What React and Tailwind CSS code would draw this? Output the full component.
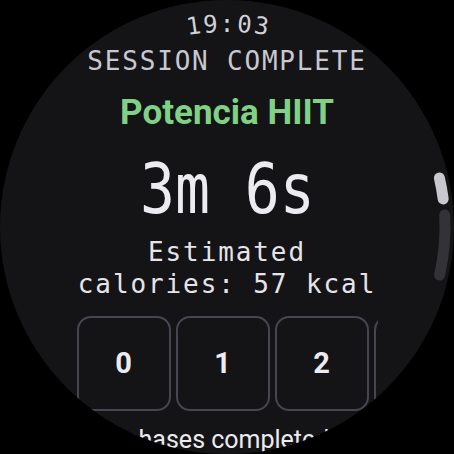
import React from "react";

const mono = { fontFamily: '"DejaVu Sans Mono", monospace' };
const sans = { fontFamily: 'Roboto, "Noto Sans", sans-serif' };

function CurvedTime() {
  // glyphs follow the top arc of the round screen
  return (
    <div className="h-[28px] mt-[10px] shrink-0 text-[24px] leading-[28px] text-[#d2d1d6] flex" style={mono}>
      <span className="inline-block w-[17px] text-center rotate-[-8deg] translate-y-[2px]">1</span>
      <span className="inline-block w-[17px] text-center rotate-[-4deg] translate-y-[0.5px]">9</span>
      <span className="inline-block w-[17px] text-center">:</span>
      <span className="inline-block w-[17px] text-center rotate-[4deg] translate-y-[0.5px]">0</span>
      <span className="inline-block w-[17px] text-center rotate-[8deg] translate-y-[2px]">3</span>
    </div>
  );
}

function ScrollIndicator() {
  return (
    <svg className="absolute inset-0 pointer-events-none" width="454" height="454" viewBox="0 0 454 454">
      <path d="M 444.7 215 A 218 218 0 0 1 439.6 275" stroke="#333337" strokeWidth="11" strokeLinecap="round" fill="none" />
      <path d="M 439.4 178 A 218 218 0 0 1 443.2 199" stroke="#c9c8ce" strokeWidth="11" strokeLinecap="round" fill="none" />
    </svg>
  );
}

export default function App() {
  const phases = [0, 1, 2, 3];

  return (
    <div className="w-[454px] h-[454px] bg-black">
      <div className="relative w-[454px] h-[454px] rounded-full overflow-hidden bg-[#141416] flex flex-col items-center">
        <CurvedTime />

        <div className="mt-[8px] shrink-0 text-[26px] leading-[30px] tracking-[1.8px] text-[#c9c7d1]" style={mono}>
          SESSION COMPLETE
        </div>

        <div className="mt-[17px] shrink-0 text-[35px] leading-[40px] font-bold text-[#80d185]" style={sans}>
          Potencia HIIT
        </div>

        <div className="mt-[21px] shrink-0 h-[70px] text-[70px] leading-[70px] text-[#ecebf0] scale-x-[0.83]" style={mono}>
          3m 6s
        </div>

        <div className="mt-[12px] shrink-0 text-[26px] leading-[32px] tracking-[1.9px] text-[#e6e4ea] text-center" style={mono}>
          Estimated
          <br />
          calories: 57 kcal
        </div>

        <div className="mt-[16px] shrink-0 w-[301px] overflow-hidden flex gap-[5px]">
          {phases.map((n) => (
            <div
              key={n}
              className="w-[94px] h-[95px] shrink-0 rounded-[14px] border-2 border-[#45464f] flex items-center justify-center text-[29px] font-bold text-[#ececf0]"
              style={sans}
            >
              {n}
            </div>
          ))}
        </div>

        <div className="mt-[13px] shrink-0 text-[25px] leading-[32px] text-[#ececf0] whitespace-nowrap" style={sans}>
          phases completed
        </div>

        <ScrollIndicator />
      </div>
    </div>
  );
}
